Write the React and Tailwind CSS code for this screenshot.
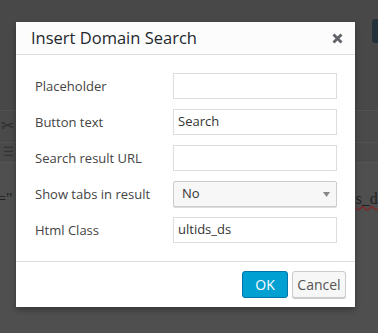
import React from 'react';

const fields = [
  { label: 'Placeholder', value: '' },
  { label: 'Button text', value: 'Search' },
  { label: 'Search result URL', value: '' },
  { label: 'Show tabs in result', value: 'No', select: true },
  { label: 'Html Class', value: 'ultids_ds' },
];

const App = () => {
  return (
    <div className="relative w-[378px] h-[333px] overflow-hidden bg-[#4f4f4f]" style={{ fontFamily: '"Open Sans", "Noto Sans", sans-serif' }}>
      {/* page behind the overlay */}
      <div className="flex flex-col">
        <div className="h-[110px] bg-[#484848] flex justify-end pt-[19px]">
          <div className="w-[6px] h-[24px] rounded-l-[3px] bg-[#23313a]" />
        </div>
        <div className="h-[32px] bg-[#4a4a4a] border-t border-[#525252] pl-[1px] pt-[6px] text-[#2e2e2e] text-[16px] leading-none">✂</div>
        <div className="h-[20px] bg-[#4a4a4a] border-t border-[#525252] text-[#333] text-[12px] pl-[3px] leading-none pt-[3px]">☰</div>
        <div className="flex-1 bg-[#4f4f4f] border-t border-[#555] pt-[24px] text-[16px] text-[#222] flex justify-between" style={{ fontFamily: '"Liberation Serif", serif' }}>
          <span className="-ml-[3px]">=&quot;</span>
          <span className="-mr-[6px] underline decoration-[#7a2a2a] decoration-wavy">s_ds</span>
        </div>
      </div>

      {/* modal */}
      <div className="absolute left-[16px] top-[22px] w-[339px] bg-white shadow-[0_3px_6px_rgba(0,0,0,0.3)]">
        <div className="h-[33px] bg-[#fcfcfc] border-b border-[#dddddd] flex items-center justify-between pl-[15px] pr-[12px]">
          <span className="text-[16.5px] text-[#23282d]">Insert Domain Search</span>
          <svg width="11" height="11" viewBox="0 0 11 11">
            <path d="M1.5 1.5 L9.5 9.5 M9.5 1.5 L1.5 9.5" stroke="#5f6368" strokeWidth="2.8" strokeLinecap="butt" />
          </svg>
        </div>
        <div className="flex flex-col gap-[10px] pt-[18px] pb-[18px] pl-[19px] pr-[18px]">
          {fields.map((f) => (
            <div key={f.label} className="flex items-center h-[26px]">
              <span className="w-[138px] text-[13px] text-[#444] leading-none">{f.label}</span>
              {f.select ? (
                <div className="flex-1 h-[26px] flex items-center justify-between border border-[#cccccc] rounded-[2px] bg-[#f7f7f7] shadow-[0_1px_0_#dddddd] pl-[8px] pr-[6px]">
                  <span className="text-[13px] text-[#333]">{f.value}</span>
                  <svg width="7" height="5" viewBox="0 0 7 5">
                    <path d="M0 0 L7 0 L3.5 5 Z" fill="#888" />
                  </svg>
                </div>
              ) : (
                <div className="flex-1 h-[26px] flex items-center border border-[#dddddd] bg-white pl-[4px] text-[13px] text-[#333]">
                  {f.value}
                </div>
              )}
            </div>
          ))}
        </div>
        <div className="border-t border-[#dddddd] h-[46px] flex items-center justify-end gap-[4px] pr-[9px]">
          <div className="w-[46px] h-[27px] flex items-center justify-center rounded-[3px] bg-[#00a0d2] border border-[#0073aa] text-white text-[14px]">OK</div>
          <div className="w-[54px] h-[27px] flex items-center justify-center rounded-[3px] bg-[#f7f7f7] border border-[#cccccc] shadow-[0_1px_0_#cccccc] text-[#555] text-[14px]">Cancel</div>
        </div>
      </div>
    </div>
  );
};

export default App;
